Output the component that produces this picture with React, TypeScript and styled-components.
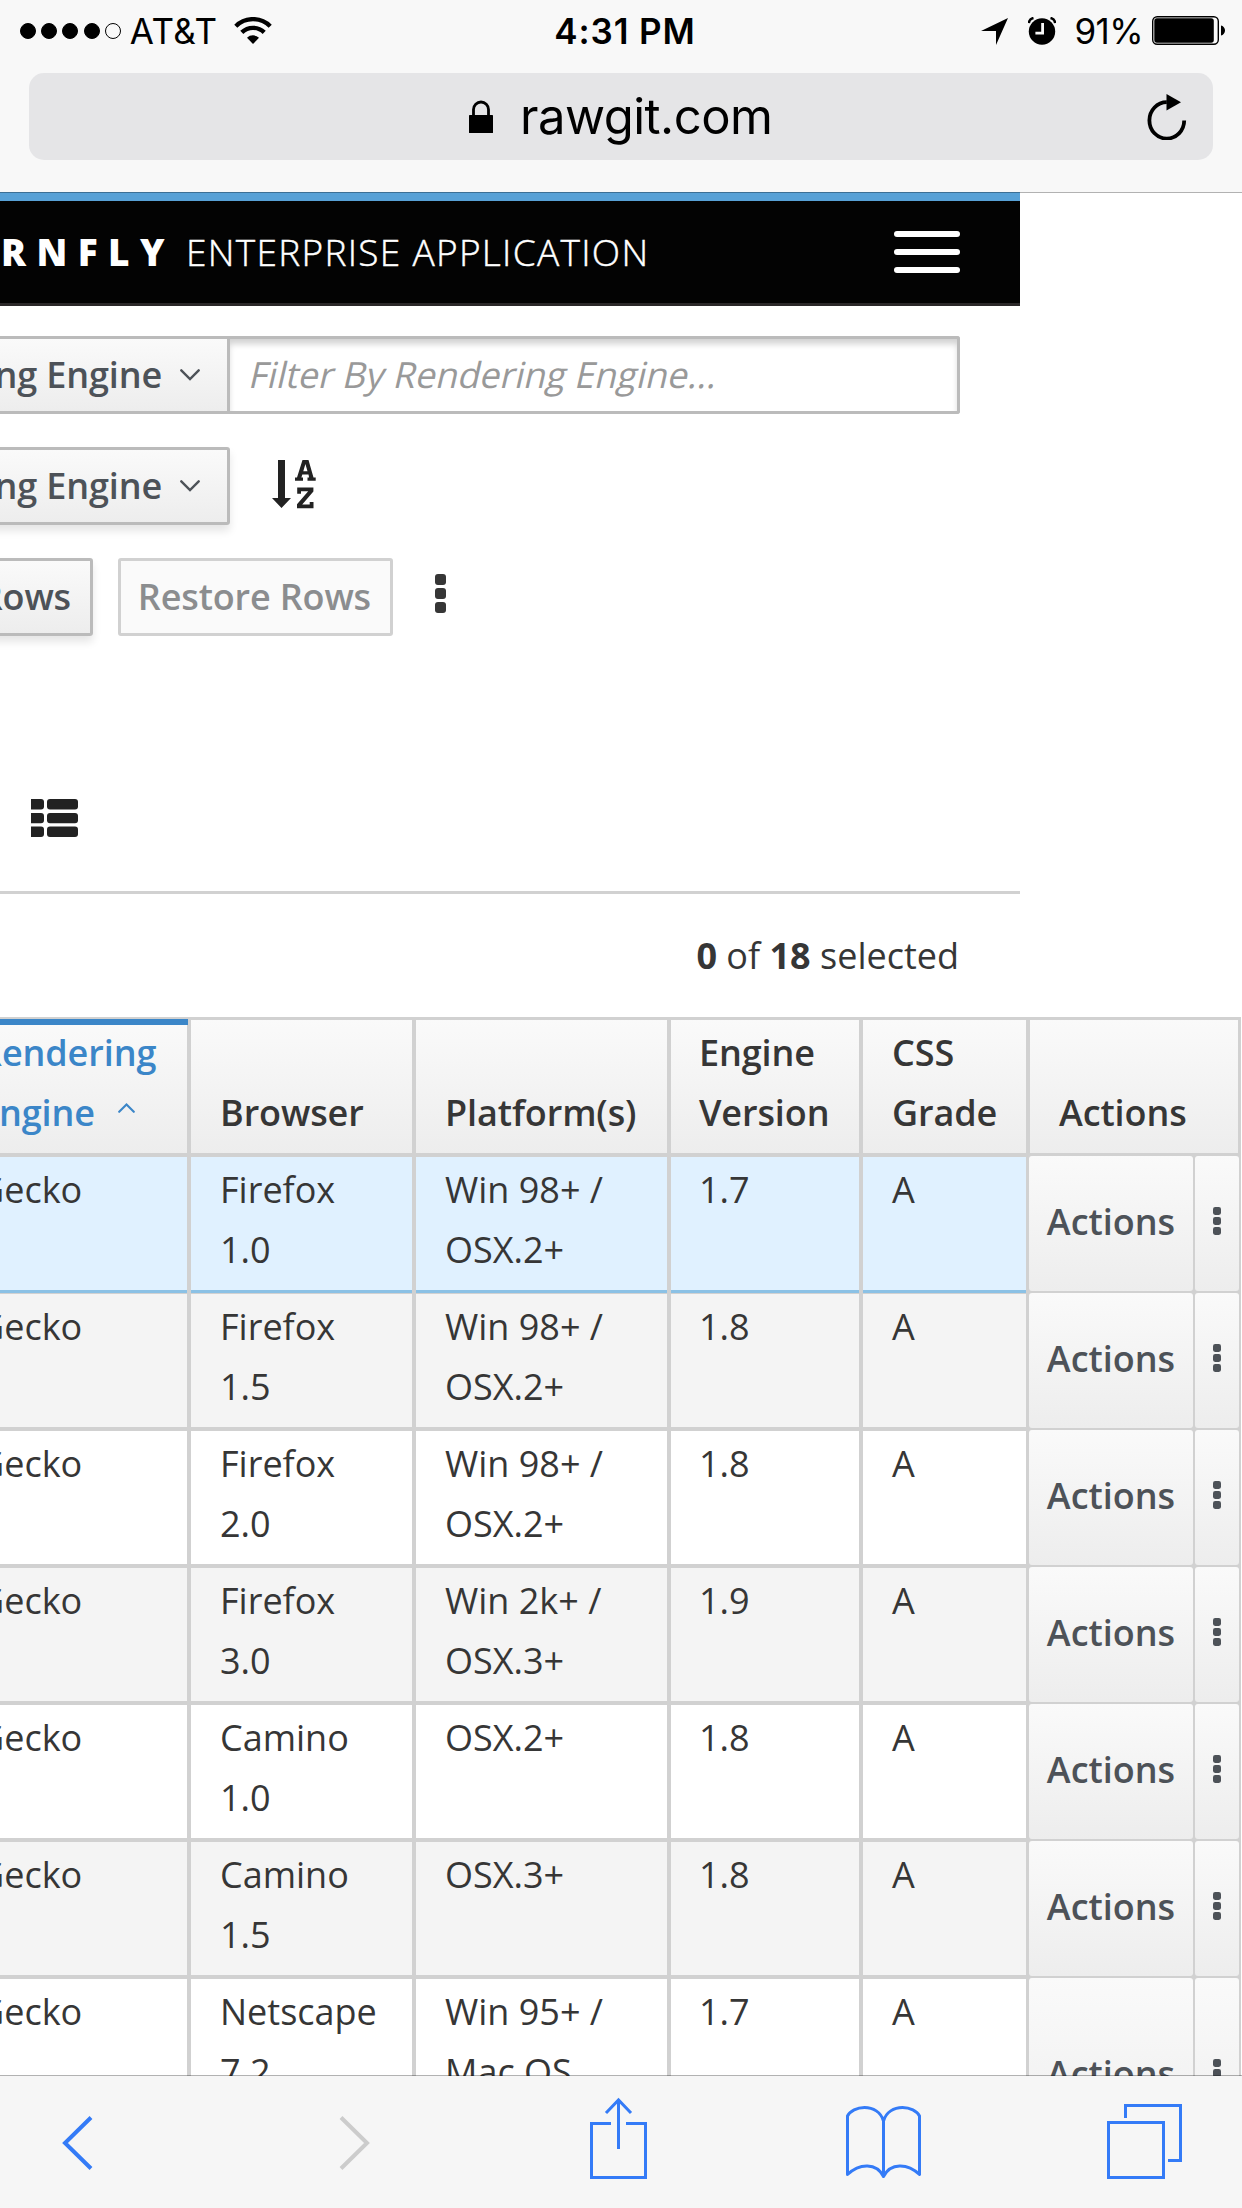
import React from "react";
import styled, { createGlobalStyle, css } from "styled-components";

const ui = `Inter, "Liberation Sans", sans-serif`;
const body = `"Open Sans", "Noto Sans", sans-serif`;
const line = "#d1d1d1";
const accent = "#3b86c8";
const iosBlue = "#347bf7";
const buttonFace = "linear-gradient(to bottom, #fafafa 0%, #ededed 100%)";

const GlobalStyle = createGlobalStyle`
  *, *::before, *::after { box-sizing: border-box; }
  html, body { margin: 0; padding: 0; background: #fff; }
  body { width: 1242px; height: 2208px; overflow: hidden; }
  svg { display: block; flex: none; }
`;

const Screen = styled.div`
  width: 1242px;
  height: 2208px;
  display: flex;
  flex-direction: column;
  overflow: hidden;
  background: #fff;
`;

/* ---------- Browser chrome ---------- */

const Chrome = styled.header`
  position: relative;
  z-index: 2;
  flex: none;
  height: 193px;
  display: flex;
  flex-direction: column;
  background: #f8f8f8;
  background-clip: padding-box;
  border-bottom: 1px solid rgba(0, 0, 0, 0.3);
  font-family: ${ui};
  color: #000;
`;

const StatusBar = styled.div`
  height: 73px;
  padding: 8px 17px 0 20px;
  display: grid;
  grid-template-columns: 1fr auto 1fr;
  font-size: 35px;
  line-height: 46px;
`;

const StatusGroup = styled.div<{ $end?: boolean }>`
  display: flex;
  height: 46px;
  align-items: center;
  justify-content: ${(p) => (p.$end ? "flex-end" : "flex-start")};
`;

const Dots = styled.div`
  display: flex;
  gap: 5.2px;
  margin-right: 9px;
`;

const Dot = styled.i<{ $empty?: boolean }>`
  width: 16px;
  height: 16px;
  border-radius: 50%;
  border: 1.4px solid #000;
  background: ${(p) => (p.$empty ? "transparent" : "#000")};
`;

const Carrier = styled.span`
  width: 104px;
  letter-spacing: 0.5px;
  white-space: nowrap;
`;

const Clock = styled.div`
  font-weight: 600;
  font-size: 35px;
  letter-spacing: 0.9px;
  padding-left: 5px;
  white-space: nowrap;
`;

const Percent = styled.span`
  margin: 0 9px 0 18px;
  letter-spacing: -0.6px;
`;

const AddressBar = styled.div`
  height: 87px;
  margin: 0 29px;
  padding: 0 26px 0 66px;
  border-radius: 15px;
  background: #e5e5e7;
  display: flex;
  align-items: center;
  justify-content: space-between;
`;

const Address = styled.div`
  flex: 1;
  padding-left: 374px;
  display: flex;
  align-items: center;
  gap: 27px;
  font-size: 49px;
  line-height: 60px;
  letter-spacing: -0.5px;
`;

/* ---------- Web page ---------- */

const Viewport = styled.main`
  flex: none;
  margin-top: -1px;
  height: 1884px;
  overflow: hidden;
  font-family: ${body};
  font-size: 36px;
  line-height: 60px;
  color: #363636;
`;

const Page = styled.div`
  width: 1242px;
  margin-left: -222px;
`;

const Masthead = styled.div`
  height: 114px;
  padding: 0 60px 0 0;
  display: flex;
  align-items: center;
  border-top: 9px solid #58a1d6;
  border-bottom: 3px solid #2b2829;
  background: #030303;
  color: #fff;
  font-size: 37px;
`;

const Brand = styled.div`
  width: 397px;
  padding-bottom: 1px;
  display: flex;
  justify-content: flex-end;
  font-weight: 800;
  letter-spacing: 10.4px;
`;

const Product = styled.div`
  flex: 1;
  padding: 0 0 1px 11px;
  font-weight: 300;
  letter-spacing: 1.3px;
  -webkit-text-stroke: 0.45px #fff;
  white-space: nowrap;
`;

const Burger = styled.div`
  width: 66px;
  display: grid;
  gap: 12px;
  i {
    height: 6px;
    border-radius: 3px;
    background: #fff;
  }
`;

const Toolbar = styled.section`
  height: 588px;
  padding: 30px 0 0 60px;
  border-bottom: 3px solid ${line};
  display: flex;
  flex-direction: column;
  gap: 33px;
`;

const ToolRow = styled.div`
  height: 78px;
  flex: none;
  display: flex;
  align-items: center;
`;

const Button = styled.button<{
  $width: number;
  $disabled?: boolean;
  $joined?: boolean;
}>`
  width: ${(p) => p.$width}px;
  height: 78px;
  padding: 0 19px 1px;
  display: flex;
  align-items: center;
  justify-content: flex-end;
  gap: 18px;
  border: 3px solid #bbb;
  border-radius: 3px;
  background: ${buttonFace};
  box-shadow: 0 6px 9px rgba(3, 3, 3, 0.1);
  color: #4d5258;
  font: 600 36px/60px ${body};
  letter-spacing: -0.15px;
  white-space: nowrap;
  ${(p) =>
    p.$joined &&
    css`
      box-shadow: none;
      border-radius: 3px 0 0 3px;
    `}
  ${(p) =>
    p.$disabled &&
    css`
      margin-left: 25px;
      border-color: ${line};
      background: #fafafa;
      box-shadow: none;
      color: #8b8d8f;
    `}
`;

const DropdownButton = styled(Button)`
  padding-right: 27px;
`;

const FilterInput = styled.div`
  width: 730px;
  height: 78px;
  padding: 0 18px 1px 20px;
  display: flex;
  align-items: center;
  border: 3px solid #bbb;
  border-left: 0;
  border-radius: 0 3px 3px 0;
  background: #fff;
  box-shadow: inset 0 6px 6px -1px rgba(3, 3, 3, 0.18);
`;

const Placeholder = styled.span`
  display: block;
  color: #999;
  white-space: nowrap;
  transform: skewX(-13deg);
  transform-origin: 0 45px;
  margin-left: -3px;
`;

const IconSlot = styled.span<{ $left: number; $top?: number }>`
  margin-left: ${(p) => p.$left}px;
  margin-top: ${(p) => p.$top ?? 0}px;
`;

const ViewRow = styled.div`
  margin-top: 130px;
  padding-left: 193px;
`;

const Selection = styled.div`
  height: 123px;
  padding: 32px 61px 0 0;
  text-align: right;
`;

const Table = styled.div`
  width: 1463px;
  border-top: 3px solid ${line};
  padding-left: 60px;
`;

const Row = styled.div<{ $head?: boolean; $lines?: number }>`
  height: ${(p) => 17 + (p.$lines ?? 2) * 60}px;
  display: grid;
  grid-template-columns: 111px 242px 225px 255px 192px ${(p) =>
      p.$head ? "167px 211px" : "166px 212px"};
`;

const HeadCell = styled.div<{ $sorted?: boolean; $last?: boolean; $inset?: number }>`
  padding: 3px 0 10px ${(p) => p.$inset ?? 29}px;
  display: flex;
  align-items: flex-end;
  border-right: ${(p) => (p.$last ? 3 : 4)}px solid ${line};
  border-bottom: 4px solid ${line};
  background: ${buttonFace};
  font-weight: 600;
  letter-spacing: -0.1px;
  white-space: pre-line;
  ${(p) =>
    p.$sorted &&
    css`
      position: relative;
      color: ${accent};
      &::before {
        content: "";
        position: absolute;
        left: 0;
        right: -1px;
        top: -1px;
        height: 6px;
        background: ${accent};
      }
    `}
`;

const SortMark = styled.span`
  display: inline-block;
  margin-left: 23px;
  vertical-align: 13px;
`;

type Tone = "selected" | "striped" | "plain";
const toneFill: Record<Tone, string> = {
  selected: "#e0f1ff",
  striped: "#f4f4f4",
  plain: "#fff",
};

const Cell = styled.div<{ $tone: Tone; $last?: boolean; $inset?: number }>`
  padding: 3px 0 0 ${(p) => p.$inset ?? 29}px;
  border-right: ${(p) => (p.$last ? 3 : 4)}px solid ${line};
  background: ${(p) => toneFill[p.$tone]};
  white-space: pre-line;
  box-shadow: inset 0 -4px 0 ${line};
  ${(p) =>
    p.$tone === "selected" &&
    css`
      box-shadow: inset 0 -1px 0 ${line}, inset 0 -4px 0 #8bc1e5;
    `}
`;

const ActionCell = styled.div`
  position: relative;
  top: -1px;
  padding: 0 2px 2px 0;
  display: grid;
  grid-template-columns: 164px 44px;
  gap: 2px;
  background: ${line};
`;

const ActionButton = styled.button<{ $lift?: number }>`
  margin: 0;
  padding: 0 0 ${(p) => p.$lift ?? 4}px;
  display: flex;
  align-items: center;
  justify-content: center;
  border: 0;
  border-radius: 3px;
  background: ${buttonFace};
  color: #4d5258;
  font: 600 36px/60px ${body};
`;

/* ---------- Bottom toolbar ---------- */

const BottomBar = styled.nav`
  position: relative;
  z-index: 2;
  flex: none;
  margin-top: -1px;
  height: 133px;
  padding-left: 60px;
  display: grid;
  grid-template-columns: 277px 251px 256px 261px 1fr;
  border-top: 1px solid rgba(0, 0, 0, 0.3);
  background: #f6f6f6;
  background-clip: padding-box;
`;

/* ---------- Icons ---------- */

const WifiIcon = () => (
  <svg width="38" height="28" viewBox="0 0 38 28" fill="none" stroke="#000" strokeWidth="4.4">
    <path d="M1.8 9.2a24.5 24.5 0 0 1 34.4 0" />
    <path d="M7.8 15.4a16 16 0 0 1 22.4 0" />
    <path d="M19 27l-6-6.2a8.6 8.6 0 0 1 12 0z" fill="#000" stroke="none" />
  </svg>
);

const LocationIcon = () => (
  <svg width="27" height="27" viewBox="0 0 27 27">
    <path d="M27 0L15 27V13H0z" />
  </svg>
);

const AlarmIcon = () => (
  <svg width="28" height="28" viewBox="0 0 28 28">
    <circle cx="14" cy="14.5" r="13.2" />
    <path d="M.8 6.2A6 6 0 0 1 5.5 1M27.2 6.2A6 6 0 0 0 22.5 1" fill="none" stroke="#000" strokeWidth="2.6" />
    <path d="M14.6 6v10.2H7.4" fill="none" stroke="#f8f8f8" strokeWidth="2.8" />
  </svg>
);

const BatteryIcon = () => (
  <svg width="73" height="30" viewBox="0 0 73 30">
    <rect x=".7" y=".7" width="65.6" height="27.6" rx="4.5" fill="none" stroke="#000" strokeWidth="1.4" />
    <rect x="2.3" y="2.3" width="59.5" height="24.4" rx="2.6" />
    <path d="M69 9.5c2.2.4 4 2.3 4 5s-1.8 4.6-4 5z" />
  </svg>
);

const LockIcon = () => (
  <svg width="24" height="33" viewBox="0 0 24 33">
    <path d="M4.5 16V9.5a7.500 7.500 0 0 1 15 0V16" fill="none" stroke="#000" strokeWidth="2.8" />
    <rect y="15" width="24" height="18" rx=".6" />
  </svg>
);

const ReloadIcon = () => (
  <svg width="40" height="46" viewBox="0 0 40 46">
    <path d="M37.2 26.500A17.400 18.200 0 1 1 19.800 8.200" fill="none" stroke="#000" strokeWidth="3.8" />
    <path d="M19.500 0l14.500 8.200-14.500 8.200z" />
  </svg>
);

const ChevronIcon = () => (
  <svg width="20" height="12" viewBox="0 0 20 12" fill="none" stroke="currentColor" strokeWidth="2.4" strokeLinecap="round">
    <path d="M1.300 1.300L10 10l8.700-8.700" />
  </svg>
);

const SortUpIcon = () => (
  <svg width="17" height="10" viewBox="0 0 17 10" fill="none" stroke="currentColor" strokeWidth="2.1" strokeLinecap="round">
    <path d="M1.200 8.800l7.300-7.300 7.300 7.300" />
  </svg>
);

const SortAlphaIcon = () => (
  <svg width="44" height="49" viewBox="0 0 44 49" fill="#222">
    <path d="M6 0h7v38h6l-9.500 10L0 38h6z" />
    <path
      fillRule="evenodd"
      d="M30.500 0h6l5 17.500h2.200v3.200h-8.200v-3.200h1.600l-.6-3h-6.200l-.9 3h1.600v3.200H23v-3.200h2zM31.300 11.200h4.200L33.400 4z"
    />
    <path d="M25.200 27.500h16.200v4L30.200 44.500h7.500v-2.600h3.800v6.300H25v-4L36.200 31.200h-7.200v2.600h-3.800z" />
  </svg>
);

const KebabIcon = ({ size, pitch }: { size: number; pitch: number }) => (
  <svg width={size} height={pitch * 2 + size} fill="currentColor">
    {[0, 1, 2].map((i) => (
      <rect key={i} y={i * pitch} width={size} height={size} rx={size * 0.27} />
    ))}
  </svg>
);

const ListIcon = () => (
  <svg width="47" height="38" viewBox="0 0 47 38" fill="#222">
    {[0, 13.9, 27.6].map((y) => (
      <React.Fragment key={y}>
        <path d={`M0 ${y}h10a3 3 0 0 1 3 3v4.400a3 3 0 0 1-3 3H0z`} />
        <rect x="16" y={y} width="31" height="10.400" rx="3" />
      </React.Fragment>
    ))}
  </svg>
);

const NavIcon = ({ width, color = iosBlue, weight = 3, children }: {
  width: number;
  color?: string;
  weight?: number;
  children: React.ReactNode;
}) => (
  <svg width={width} height="132" viewBox={`0 0 ${width} 132`} fill="none" stroke={color} strokeWidth={weight}>
    {children}
  </svg>
);

/* ---------- Data ---------- */

const rows: [string, string, string, string][] = [
  ["Firefox\n1.0", "Win 98+ /\nOSX.2+", "1.7", "A"],
  ["Firefox\n1.5", "Win 98+ /\nOSX.2+", "1.8", "A"],
  ["Firefox\n2.0", "Win 98+ /\nOSX.2+", "1.8", "A"],
  ["Firefox\n3.0", "Win 2k+ /\nOSX.3+", "1.9", "A"],
  ["Camino\n1.0", "OSX.2+", "1.8", "A"],
  ["Camino\n1.5", "OSX.3+", "1.8", "A"],
  ["Netscape\n7.2", "Win 95+ /\nMac OS", "1.7", "A"],
];

export default function App() {
  return (
    <Screen>
      <GlobalStyle />
      <Chrome>
        <StatusBar>
          <StatusGroup>
            <Dots>
              <Dot /><Dot /><Dot /><Dot /><Dot $empty />
            </Dots>
            <Carrier>AT&amp;T</Carrier>
            <WifiIcon />
          </StatusGroup>
          <Clock>4:31 PM</Clock>
          <StatusGroup $end>
            <LocationIcon />
            <IconSlot $left={20}><AlarmIcon /></IconSlot>
            <Percent>91%</Percent>
            <BatteryIcon />
          </StatusGroup>
        </StatusBar>
        <AddressBar>
          <Address>
            <LockIcon />
            rawgit.com
          </Address>
          <ReloadIcon />
        </AddressBar>
      </Chrome>

      <Viewport>
        <Page>
          <Masthead>
            <Brand>PATTERNFLY</Brand>
            <Product>ENTERPRISE APPLICATION</Product>
            <Burger><i /><i /><i /></Burger>
          </Masthead>

          <Toolbar>
            <ToolRow>
              <DropdownButton $width={392} $joined>Rendering Engine <ChevronIcon /></DropdownButton>
              <FilterInput><Placeholder>Filter By Rendering Engine...</Placeholder></FilterInput>
            </ToolRow>
            <ToolRow>
              <DropdownButton $width={392}>Rendering Engine <ChevronIcon /></DropdownButton>
              <IconSlot $left={42} $top={-3}><SortAlphaIcon /></IconSlot>
            </ToolRow>
            <ToolRow>
              <Button $width={255}>Delete Rows</Button>
              <Button $width={275} $disabled disabled>Restore Rows</Button>
              <IconSlot $left={42} $top={-7}><KebabIcon size={11} pitch={14} /></IconSlot>
            </ToolRow>
            <ViewRow><ListIcon /></ViewRow>
          </Toolbar>

          <Selection><b>0</b> of <b>18</b> selected</Selection>

          <Table>
            <Row $head>
              <HeadCell />
              <HeadCell $sorted $inset={30}>
                <span>{"Rendering\nEngine"}<SortMark><SortUpIcon /></SortMark></span>
              </HeadCell>
              <HeadCell>Browser</HeadCell>
              <HeadCell>Platform(s)</HeadCell>
              <HeadCell $inset={28}>{"Engine\nVersion"}</HeadCell>
              <HeadCell>{"CSS\nGrade"}</HeadCell>
              <HeadCell $last>Actions</HeadCell>
            </Row>
            {rows.map(([browser, platform, version, grade], i) => {
              const tone: Tone = i === 0 ? "selected" : i % 2 ? "striped" : "plain";
              return (
                <Row key={i} $lines={i === rows.length - 1 ? 3 : 2}>
                  <Cell $tone={tone} />
                  <Cell $tone={tone}>Gecko</Cell>
                  <Cell $tone={tone}>{browser}</Cell>
                  <Cell $tone={tone}>{platform}</Cell>
                  <Cell $tone={tone} $inset={28}>{version}</Cell>
                  <Cell $tone={tone} $last>{grade}</Cell>
                  <ActionCell>
                    <ActionButton>Actions</ActionButton>
                    <ActionButton $lift={6}><KebabIcon size={8} pitch={10} /></ActionButton>
                  </ActionCell>
                </Row>
              );
            })}
          </Table>
        </Page>
      </Viewport>

      <BottomBar>
        <NavIcon width={34} weight={4}><path d="M31 41.500L5 67l26 25.500" /></NavIcon>
        <NavIcon width={34} weight={4} color="#ccc"><path d="M4 41.500L30 67 4 92.500" /></NavIcon>
        <NavIcon width={62}>
          <path d="M23 47.500H3.500v54h54v-54H38" />
          <path d="M30.500 73V24M18 37l12.500-13L43 37" />
        </NavIcon>
        <NavIcon width={80}>
          <path d="M39.500 100V45C37 36 29 31.500 20.500 31.500 13 31.500 6 35 3.500 40v58.500c12-11.500 29-12 36 2 7-14 24-13.500 36-2V40c-2.500-5-9.500-8.500-17-8.500C50 31.500 42 36 39.500 45" strokeLinejoin="round" />
        </NavIcon>
        <NavIcon width={80}>
          <path d="M3.500 46.500h55v55h-55z" />
          <path d="M20.500 42V29.500h55v55H63" />
        </NavIcon>
      </BottomBar>
    </Screen>
  );
}
